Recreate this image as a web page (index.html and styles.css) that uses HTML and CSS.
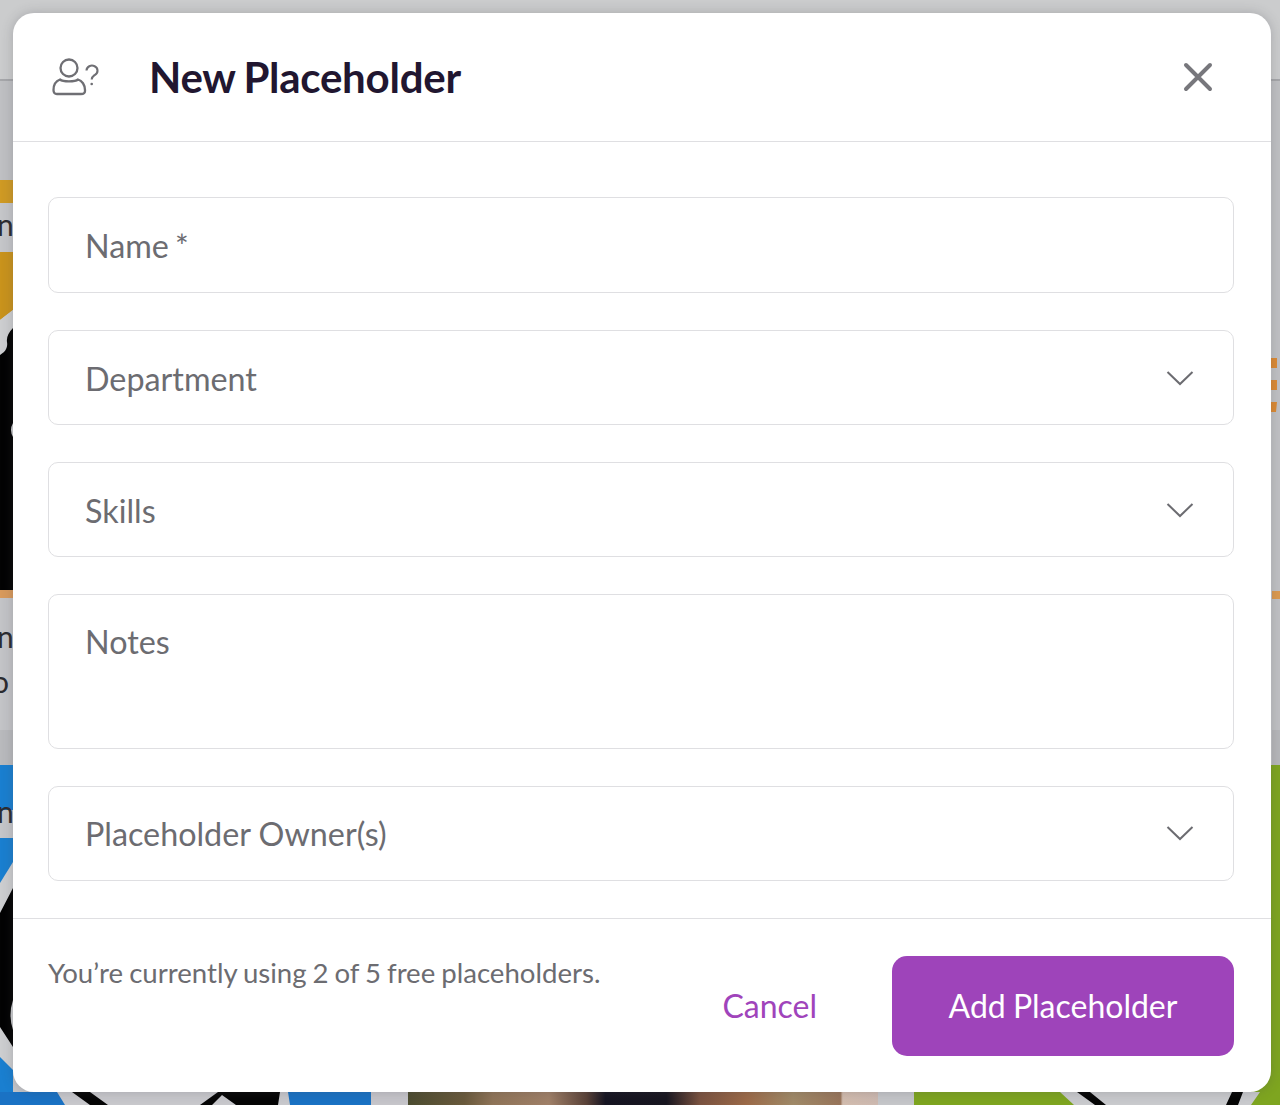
FILE: index.html
```html
<!DOCTYPE html>
<html lang="en">
<head>
<meta charset="utf-8">
<title>New Placeholder</title>
<link rel="stylesheet" href="styles.css">
</head>
<body>
<svg class="backdrop" viewBox="0 0 1280 1105" aria-hidden="true">
  <defs>
    <linearGradient id="hair" x1="0" x2="1" y1="0" y2="0">
      <stop offset="0" stop-color="#4c4c30"/>
      <stop offset=".12" stop-color="#6a5a3c"/>
      <stop offset=".18" stop-color="#8f7458"/>
      <stop offset=".3" stop-color="#a08068"/>
      <stop offset=".38" stop-color="#5a4238"/>
      <stop offset=".42" stop-color="#161522"/>
      <stop offset=".55" stop-color="#181620"/>
      <stop offset=".62" stop-color="#7a5240"/>
      <stop offset=".72" stop-color="#9c6a48"/>
      <stop offset=".82" stop-color="#a08a68"/>
      <stop offset=".92" stop-color="#98745a"/>
      <stop offset=".925" stop-color="#d2bcae"/>
      <stop offset="1" stop-color="#cdb9b0"/>
    </linearGradient>
  </defs>
  <rect width="1280" height="1105" fill="#c5c6c9"/>
  <rect y="0" width="1280" height="79" fill="#cbcccd"/>
  <rect y="79" width="1280" height="2" fill="#a6a7aa"/>
  <rect y="81" width="1280" height="99" fill="#bfc0c3"/>
  <rect y="180" width="13" height="23" fill="#cf9a24"/>
  <path d="M0 252 H13 V310 L0 320Z" fill="#c9931c"/>
  <path d="M0 320 L13 310 V592 H0Z" fill="#cdced0"/>
  <path d="M13 328 Q6 335 7 342 Q8 348 4 352 L0 355 V590 H13 V437 Q9 430 13 423Z" fill="#030303"/>
  <rect y="590" width="13" height="8" fill="#d89a5c"/>
  <rect y="598" width="13" height="132" fill="#c3c4c7"/>
  <rect y="730" width="13" height="35" fill="#b9babd"/>
  <rect y="765" width="13" height="45" fill="#1a7fd0"/>
  <rect y="838" width="13" height="267" fill="#1a7fd0"/>
  <path d="M0 883 L13 862 V1070 L0 1057Z" fill="#cdced0"/>
  <path d="M0 913 L13 888 V1000 Q8 1015 13 1030 V1047 L0 1027Z" fill="#030303"/>
  <rect y="1092" width="371" height="13" fill="#1a72c4"/>
  <path d="M57 1092 L65 1105 H290 L288 1092Z" fill="#c8c8cc"/>
  <path d="M72 1092 H90 L108 1105 H90Z M218 1092 H280 L278 1105 H236 L222 1095 L212 1105 H200Z" fill="#050505"/>
  <rect x="371" y="1092" width="37" height="13" fill="#c6c5ca"/>
  <rect x="408" y="1092" width="470" height="13" fill="url(#hair)"/>
  <rect x="914" y="765" width="366" height="340" fill="#7ea520"/>
  <path d="M1060 1092 L1074 1105 H1251 L1260 1092Z" fill="#c9cacd"/>
  <path d="M1077 1092 H1090 L1106 1105 H1095Z M1243 1092 H1232 L1226 1105 H1238Z" fill="#050505"/>
  <rect x="1272" y="180" width="8" height="550" fill="#c0c1c4"/>
  <rect x="1272" y="730" width="8" height="35" fill="#b6b7ba"/>
  <path d="M1271 358h6v10h-6z M1271 380h6v10h-6z M1271 402h6l-1 10h-5z" fill="#dc8a34"/>
  <rect x="1272" y="591" width="8" height="8" fill="#dc9a50"/>
  <text x="-3" y="236" class="scrap">n'</text>
  <text x="-3" y="648" class="scrap">n '</text>
  <text x="-8" y="693" class="scrap">o</text>
  <text x="-3" y="823" class="scrap">n'</text>
</svg>

<main class="modal">
  <header class="modal-head">
    <svg class="person-icon" viewBox="0 0 48 38" aria-hidden="true">
      <circle cx="17" cy="10" r="8.500"/>
      <path d="M8 21.500C11 24 23 24 26 21.500C30 22.500 33 27 33 32V33Q33 36 29 36H5Q1.500 36 1.500 32C1.500 27 4 23 8 21.500Z"/>
      <path class="mark" d="M34.500 12.500a5.500 5 0 1 1 8.500 4.300c-2 1.500-3.300 2.200-3.300 4.700"/>
      <circle class="dot" cx="39.700" cy="26" r="1.300"/>
    </svg>
    <h1 class="title">New Placeholder</h1>
    <svg class="close-icon" viewBox="0 0 30 30" aria-label="Close">
      <path d="M3 3 L27 27 M27 3 L3 27"/>
    </svg>
  </header>

  <form class="fields">
    <div class="field field-name"><span>Name *</span></div>
    <div class="field field-select"><span>Department</span>
      <svg class="chev" viewBox="0 0 28 16"><path d="M1.500 2 L14 14 L26.500 2"/></svg></div>
    <div class="field field-select"><span>Skills</span>
      <svg class="chev" viewBox="0 0 28 16"><path d="M1.500 2 L14 14 L26.500 2"/></svg></div>
    <div class="field field-notes"><span>Notes</span></div>
    <div class="field field-select field-owner"><span>Placeholder Owner(s)</span>
      <svg class="chev" viewBox="0 0 28 16"><path d="M1.500 2 L14 14 L26.500 2"/></svg></div>
  </form>

  <footer class="modal-foot">
    <p class="usage">You’re currently using 2 of 5 free placeholders.</p>
    <button class="cancel" type="button">Cancel</button>
    <button class="add" type="button">Add Placeholder</button>
  </footer>
</main>
</body>
</html>
```

FILE: styles.css
```css
html, body {
  margin: 0;
  height: 1105px;
  overflow: hidden;
}

body {
  position: relative;
  box-sizing: border-box;
  padding: 13px 9px 0 13px;
  font-family: Lato, "Liberation Sans", sans-serif;
  background: #c5c6c9;
}

.backdrop {
  position: absolute;
  inset: 0;
  width: 1280px;
  height: 1105px;
  display: block;
}

.scrap {
  font-family: Lato, sans-serif;
  font-size: 30px;
  fill: #2c2c30;
}

.modal {
  position: relative;
  box-sizing: border-box;
  width: 1258px;
  height: 1079px;
  background: #fff;
  border-radius: 21px;
  display: flex;
  flex-direction: column;
  box-shadow: 0 0 12px rgba(60, 60, 70, .25);
}

.modal-head {
  box-sizing: border-box;
  height: 129px;
  flex: none;
  display: flex;
  align-items: center;
  padding: 0 58px 0 39px;
  border-bottom: 1.500px solid #dfdfe2;
}

.person-icon {
  width: 48px;
  height: 38px;
  flex: none;
  fill: none;
  stroke: #6f6f74;
  stroke-width: 2.300;
  margin-bottom: 1px;
}

.person-icon .mark {
  stroke-width: 2.100;
}

.person-icon .dot {
  fill: #6f6f74;
  stroke: none;
}

.title {
  margin: 0 0 0 49px;
  flex: 1;
  font-size: 42px;
  line-height: 50px;
  font-weight: 700;
  color: #211630;
  letter-spacing: -.25px;
  word-spacing: -1.500px;
}

.close-icon {
  width: 30px;
  height: 30px;
  flex: none;
  fill: none;
  stroke: #77777c;
  stroke-width: 4;
  stroke-linecap: round;
}

.fields {
  flex: none;
  box-sizing: border-box;
  height: 776px;
  padding: 54.500px 37px 0 35px;
  display: flex;
  flex-direction: column;
  gap: 36.500px;
}

.field {
  box-sizing: border-box;
  height: 95.500px;
  flex: none;
  display: flex;
  align-items: center;
  justify-content: space-between;
  padding: 0 39px 0 36px;
  border: 1.500px solid #dfdfe2;
  border-radius: 10px;
  font-size: 32.300px;
  word-spacing: -2px;
  color: #6c6c71;
}

.field-name {
  height: 96.500px;
  padding-top: 2px;
}

.field-select {
  padding-top: 3px;
}

.field-owner {
  height: 95px;
  padding-top: 2px;
  word-spacing: 0;
}

.field-notes {
  height: 155.500px;
  align-items: flex-start;
  padding-top: 27px;
}

.field span {
  line-height: 40px;
}

.chev {
  width: 28px;
  height: 16px;
  fill: none;
  stroke: #6c6c71;
  stroke-width: 2;
  margin-bottom: 2px;
}

.modal-foot {
  flex: 1;
  display: flex;
  align-items: flex-start;
  padding: 37px 37px 0 35px;
  border-top: 1.500px solid #dfdfe2;
}

.usage {
  margin: -1px 0 0;
  flex: 1;
  font-size: 27.600px;
  word-spacing: -1.100px;
  line-height: 36px;
  color: #6c6c71;
}

.cancel, .add {
  font-family: inherit;
  font-size: 32px;
  border: 0;
  padding: 0;
  cursor: pointer;
}

.cancel {
  height: 99.500px;
  background: none;
  color: #a044bb;
  margin-right: 75px;
}

.add {
  width: 342px;
  height: 99.500px;
  border-radius: 15px;
  background: #9e44ba;
  color: #fff;
  word-spacing: -1px;
}
```
